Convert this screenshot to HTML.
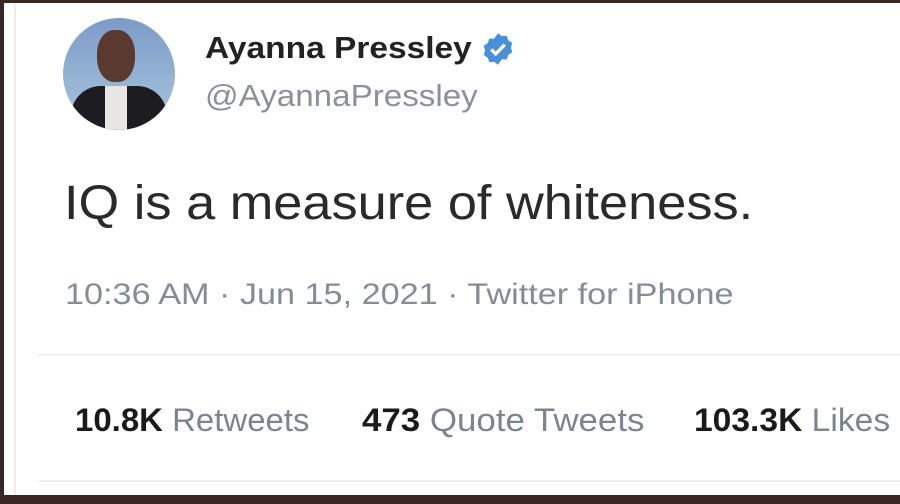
<!DOCTYPE html>
<html><head><style>
body{margin:0;width:900px;height:504px;background:#3a2624;overflow:hidden;font-family:"Liberation Sans",sans-serif;position:relative}
.card{position:absolute;left:4px;top:3px;width:900px;height:492px;background:#fff}
.vl{position:absolute;left:14px;top:3px;width:2px;height:492px;background:#eceeef}
.av{position:absolute;left:63px;top:18px;width:112px;height:112px;border-radius:50%;background:linear-gradient(180deg,#7d9bc8,#a8c6dc);overflow:hidden}
.t{position:absolute;white-space:nowrap;transform-origin:left top}
.hr{position:absolute;left:38px;right:0;height:2px;background:#eef0f2}
b{color:#1a1a1a}
</style></head><body>
<div class="card"></div><div class="vl"></div>
<div class="av">
 <div style="position:absolute;left:34px;top:12px;width:38px;height:52px;border-radius:45%;background:#5a3a30"></div>
 <div style="position:absolute;left:8px;top:68px;width:96px;height:60px;border-radius:30px 30px 0 0;background:#1d1c20"></div>
 <div style="position:absolute;left:42px;top:68px;width:22px;height:50px;background:#e8e6e2"></div>
</div>
<div class="t" style="left:205px;top:30px;font-size:31px;font-weight:bold;color:#222;transform:scaleX(1.08)">Ayanna Pressley</div>
<svg style="position:absolute;left:480px;top:31px" width="36" height="36" viewBox="0 0 24 24"><path fill="#4a90d9" d="M12 1.5l2.6 1.9 3.2-.2 1 3 2.7 1.8-.9 3.1.9 3.1-2.7 1.8-1 3-3.2-.2L12 22.5l-2.6-1.9-3.2.2-1-3-2.7-1.8.9-3.1-.9-3.1 2.7-1.8 1-3 3.2.2z"/><path d="M7.5 12.3l3 3 6-6.2" stroke="#fff" stroke-width="2.2" fill="none"/></svg>
<div class="t" style="left:205px;top:78px;font-size:31px;color:#8a9299;transform:scaleX(1.07)">@AyannaPressley</div>
<div class="t" style="left:64px;top:176px;font-size:48px;color:#2a2a2a;transform:scaleX(1.09)">IQ is a measure of whiteness.</div>
<div class="t" style="left:65px;top:278px;font-size:30px;color:#858d94;transform:scaleX(1.14)">10:36 AM · Jun 15, 2021 · Twitter for iPhone</div>
<div class="hr" style="top:354px"></div>
<div class="t" style="left:75px;top:402px;font-size:32px;color:#7d858c;transform:scaleX(1.03)"><b>10.8K</b> Retweets</div>
<div class="t" style="left:362px;top:402px;font-size:32px;color:#7d858c;transform:scaleX(1.09)"><b>473</b> Quote Tweets</div>
<div class="t" style="left:694px;top:402px;font-size:32px;color:#7d858c;transform:scaleX(1.05)"><b>103.3K</b> Likes</div>
<div class="hr" style="top:480px"></div>
</body></html>
